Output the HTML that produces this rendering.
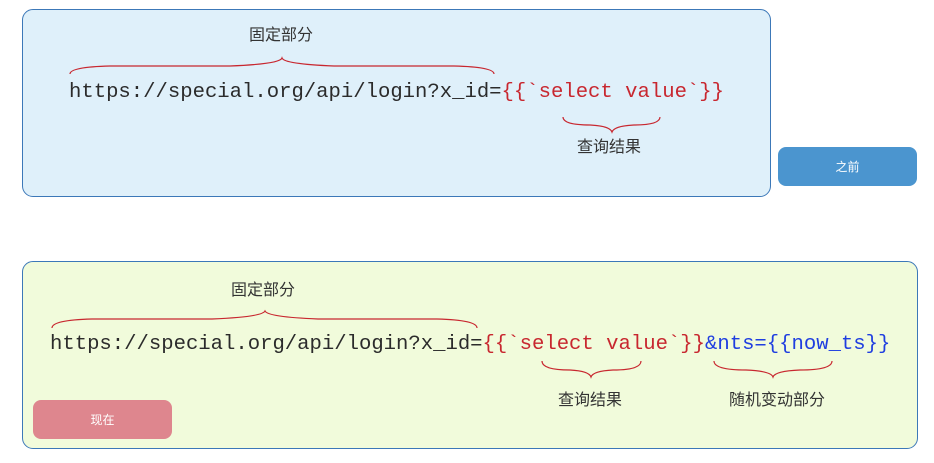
<!DOCTYPE html><html><head><meta charset="utf-8"><style>
body{margin:0;width:934px;height:463px;background:#fff;position:relative;overflow:hidden;font-family:"Liberation Sans","Noto Sans CJK SC",sans-serif}
.box{position:absolute;border:1px solid #3c78b8;border-radius:11px}
.m{position:absolute;font-family:"Liberation Mono",monospace;font-size:20.6px;color:#2b2b2b;white-space:pre;line-height:24px}
.r{color:#c8272f}.b{color:#1f3ee0}
.l{position:absolute;font-size:16px;color:#333;transform:translateX(-50%);white-space:nowrap;line-height:20px}
.btn{position:absolute;border-radius:8px;color:#fff;font-size:12px;text-align:center}
svg{position:absolute;left:0;top:0}
</style></head><body>
<div class="box" style="left:22px;top:9px;width:747px;height:186px;background:#dff0fa"></div>
<div class="box" style="left:22px;top:261px;width:894px;height:186px;background:#f1fbdb"></div>
<div class="btn" style="left:778px;top:147px;width:139px;height:39px;line-height:41px;background:#4b95cf">之前</div>
<div class="btn" style="left:33px;top:400px;width:139px;height:39px;line-height:41px;background:#de868e">现在</div>
<div class="m" style="left:69px;top:81px">https://special.org/api/login?x_id=<span class="r">{{`select value`}}</span></div>
<div class="m" style="left:50px;top:333px">https://special.org/api/login?x_id=<span class="r">{{`select value`}}</span><span class="b">&amp;nts={{now_ts}}</span></div>
<div class="l" style="left:281px;top:26px">固定部分</div>
<div class="l" style="left:609px;top:138px">查询结果</div>
<div class="l" style="left:263px;top:281px">固定部分</div>
<div class="l" style="left:590px;top:391px">查询结果</div>
<div class="l" style="left:777px;top:391px">随机变动部分</div>
<svg width="934" height="463" fill="none" stroke="#c8272f" stroke-width="1.2">
<path d="M70 74 Q70 67 110 66 L230 66 Q280 64 282 58 Q284 64 334 66 L454 66 Q494 67 494 74"/>
<path d="M563 117 Q563 125 590 125 Q610 126 612 132 Q614 126 634 125 Q660 125 660 117"/>
<path d="M52 328 Q52 320 92 319 L212 319 Q262 317 265 311 Q268 317 318 319 L437 319 Q477 320 477 328"/>
<path d="M542 361 Q542 370 570 370 Q589 371 591 377 Q593 371 613 370 Q641 370 641 361"/>
<path d="M714 361 Q714 370 746 370 Q771 371 773 377 Q775 371 800 370 Q832 370 832 361"/>
</svg>
</body></html>
